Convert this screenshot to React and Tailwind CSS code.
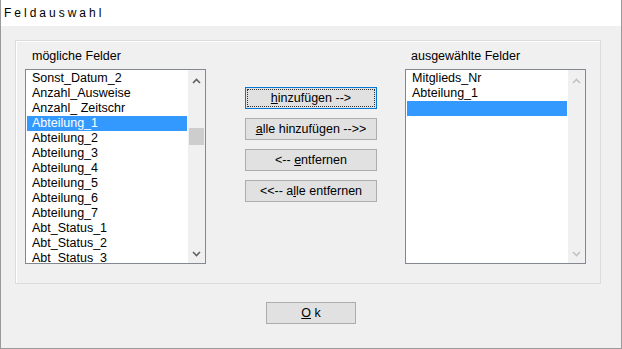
import React from "react";

const available = [
  "Sonst_Datum_2",
  "Anzahl_Ausweise",
  "Anzahl_ Zeitschr",
  "Abteilung_1",
  "Abteilung_2",
  "Abteilung_3",
  "Abteilung_4",
  "Abteilung_5",
  "Abteilung_6",
  "Abteilung_7",
  "Abt_Status_1",
  "Abt_Status_2",
  "Abt_Status_3",
];

const selected = ["Mitglieds_Nr", "Abteilung_1", ""];

function Chevron({ up, light }) {
  return (
    <svg width="9" height="6" viewBox="0 0 9 6" className="block">
      <polyline
        points={up ? "1,5 4.5,1.5 8,5" : "1,1 4.5,4.5 8,1"}
        fill="none"
        stroke={light ? "#c2c2c2" : "#606060"}
        strokeWidth="1.6"
      />
    </svg>
  );
}

function ListBox({ items, activeIndex, thumb }) {
  return (
    <div className="flex w-[181px] h-[195px] border border-[#828790] bg-white">
      <ul className="flex-1 overflow-hidden p-[1px]">
        {items.map((item, i) => (
          <li
            key={i}
            className={
              i === activeIndex
                ? "h-[15px] leading-[15px] pl-[5px] bg-[#3399ff] text-white whitespace-nowrap"
                : "h-[15px] leading-[15px] pl-[5px] text-black whitespace-nowrap"
            }
          >
            {item}
          </li>
        ))}
      </ul>
      <div className="w-[17px] bg-[#f0f0f0] flex flex-col items-center">
        <div className="h-[17px] flex items-center justify-center pt-[4px]">
          <Chevron up light={!thumb} />
        </div>
        {thumb ? (
          <div className="mt-[41px] w-[15px] h-[17px] bg-[#cdcdcd]" />
        ) : null}
        <div className="flex-1" />
        <div className="h-[17px] flex items-center justify-center pb-[2px]">
          <Chevron light={!thumb} />
        </div>
      </div>
    </div>
  );
}

function Button({ children, focused, className = "" }) {
  return (
    <button
      className={
        "h-[22px] bg-[#e1e1e1] text-black leading-none flex items-center justify-center " +
        (focused ? "border border-[#0078d7] p-[1px] " : "border border-[#adadad] ") +
        className
      }
    >
      {focused ? (
        <span className="w-full h-full flex items-center justify-center border border-dotted border-[#333]">
          {children}
        </span>
      ) : (
        children
      )}
    </button>
  );
}

export default function App() {
  return (
    <div
      className="w-[622px] h-[349px] flex flex-col border-x border-b border-[#9a9a9a] bg-[#f0f0f0] text-[12.5px] text-black"
      style={{ fontFamily: '"Liberation Sans", Arial, sans-serif' }}
    >
      <div className="h-[26px] bg-white pl-[3px] pt-[6px] text-[12px] tracking-[3px] leading-[15px]">
        Feldauswahl
      </div>

      <div className="ml-[14px] mt-[14px] w-[586px] h-[244px] border border-[#dcdcdc] shadow-[inset_1px_1px_0_#ffffff] flex">
        <div className="ml-[9px] pt-[8px] flex flex-col">
          <div className="ml-[7px] leading-[15px] mb-[5px]">mögliche Felder</div>
          <ListBox items={available} activeIndex={3} thumb />
        </div>

        <div className="ml-[39px] pt-[46px] flex flex-col gap-[9px]">
          <Button focused className="w-[132px]">
            <span>
              <u>h</u>inzufügen --&gt;
            </span>
          </Button>
          <Button className="w-[132px]">
            <span>
              <u>a</u>lle hinzufügen --&gt;&gt;
            </span>
          </Button>
          <Button className="w-[132px]">
            <span>
              &lt;-- <u>e</u>ntfernen
            </span>
          </Button>
          <Button className="w-[132px]">
            <span>
              &lt;&lt;-- a<u>l</u>le entfernen
            </span>
          </Button>
        </div>

        <div className="ml-[28px] pt-[8px] flex flex-col">
          <div className="ml-[6px] leading-[15px] mb-[5px]">ausgewählte Felder</div>
          <ListBox items={selected} activeIndex={2} />
        </div>
      </div>

      <div className="mt-[18px] flex justify-center">
        <Button className="w-[90px]">
          <span>
            <u>O</u> k
          </span>
        </Button>
      </div>
    </div>
  );
}
